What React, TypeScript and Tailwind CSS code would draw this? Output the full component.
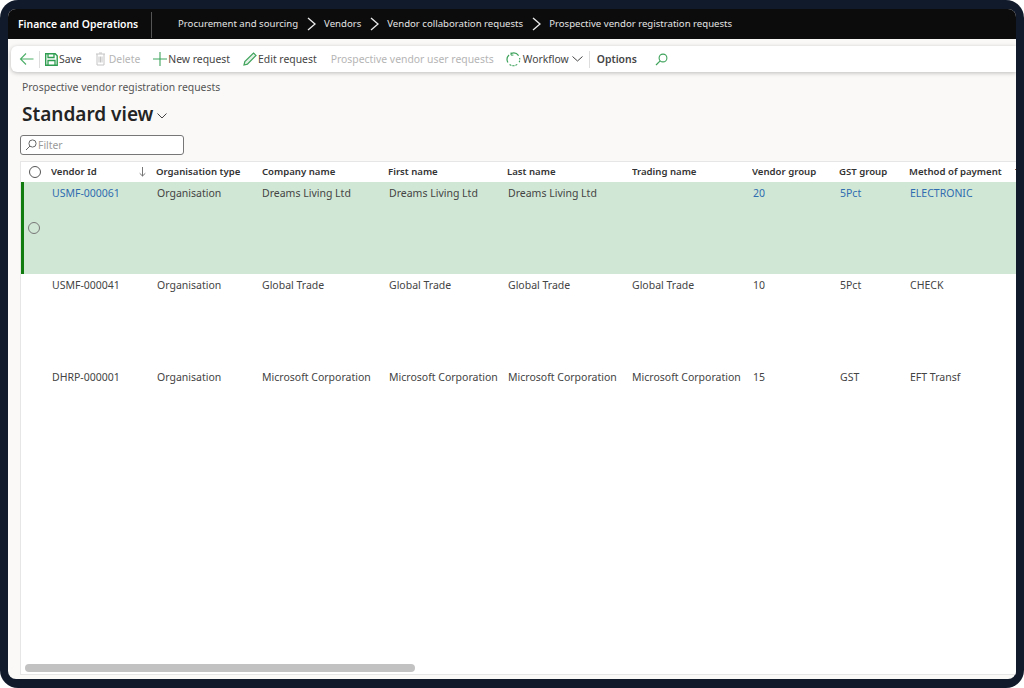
import React from "react";

const cols = "grid grid-cols-[30px_105px_106px_126px_119px_125px_120px_87px_70px_106px_40px]";

const headers = ["Vendor Id", "Organisation type", "Company name", "First name", "Last name", "Trading name", "Vendor group", "GST group", "Method of payment", "T"];

const rows = [
  { id: "USMF-000061", c: "Dreams Living Ltd", t: "", g: "20", s: "5Pct", m: "ELECTRONIC", sel: true },
  { id: "USMF-000041", c: "Global Trade", t: "Global Trade", g: "10", s: "5Pct", m: "CHECK", sel: false },
  { id: "DHRP-000001", c: "Microsoft Corporation", t: "Microsoft Corporation", g: "15", s: "GST", m: "EFT Transf", sel: false },
];

function Chevron() {
  return (
    <svg width="9" height="14" viewBox="0 0 9 14" fill="none" className="ml-[9px] mr-[8px]">
      <path d="M1 1 L8 7 L1 13" stroke="#e8e8e8" strokeWidth="1.4" />
    </svg>
  );
}

function Circle({ c = "#555" }: { c?: string }) {
  return <span className="block w-[12px] h-[12px] rounded-full border bg-transparent" style={{ borderColor: c }} />;
}

export default function App() {
  return (
    <div className="w-[1024px] h-[688px] bg-white overflow-hidden font-['Noto_Sans',sans-serif]">
      <div className="w-full h-full bg-[#111a2b] rounded-[18px] pt-[9px] pl-[8px] pr-[8px] pb-[9px]">
        <div className="w-full h-full flex flex-col rounded-[8px] overflow-hidden bg-[#faf9f8]">
          <header className="h-[30px] shrink-0 bg-[#0c0c0c] flex items-center text-[#e4e4e4] text-[9.6px] pt-[1px]">
            <div className="w-[144px] h-[26px] pl-[10px] flex items-center border-r border-[#555] font-semibold text-white text-[10.4px]">
              Finance and Operations
            </div>
            <div className="pl-[26px] flex items-center">
              <span>Procurement and sourcing</span>
              <Chevron />
              <span>Vendors</span>
              <Chevron />
              <span>Vendor collaboration requests</span>
              <Chevron />
              <span>Prospective vendor registration requests</span>
            </div>
          </header>

          <div className="h-[26px] mt-[7px] ml-[3px] bg-white rounded-l-[6px] shadow-[0_1px_4px_rgba(0,0,0,0.25)] flex items-center text-[10.4px] text-[#444]">
            <svg width="15" height="14" viewBox="0 0 15 14" fill="none" className="ml-[8px]">
              <path d="M14.5 7H1.5M7 1.5 1.5 7 7 12.5" stroke="#4caf68" strokeWidth="1.1" />
            </svg>
            <span className="w-px h-[17px] bg-[#ddd] ml-[5px]" />
            <svg width="13" height="13" viewBox="0 0 13 13" fill="none" className="ml-[5px]">
              <path d="M.7.7h9.5l2 2v9.6H.7z" stroke="#2f9e50" strokeWidth="1.4" />
              <path d="M3 .7v3.8h6V.7M3 12.3V7.5h7v4.8" stroke="#2f9e50" strokeWidth="1.3" />
            </svg>
            <span className="ml-[1px] pt-[2px]">Save</span>
            <svg width="11" height="14" viewBox="0 0 11 14" fill="none" className="ml-[13px]">
              <path d="M1 2h9M4 1h3M2 2v11h7V2M4 4.5v6M5.5 4.5v6M7 4.5v6" stroke="#c4c4c4" strokeWidth="1" />
            </svg>
            <span className="ml-[3px] pt-[2px] text-[#b5b5b5]">Delete</span>
            <svg width="14" height="14" viewBox="0 0 14 14" fill="none" className="ml-[13px]">
              <path d="M7 0v14M0 7h14" stroke="#3fa35c" strokeWidth="1.1" />
            </svg>
            <span className="ml-px pt-[2px]">New request</span>
            <svg width="14" height="14" viewBox="0 0 14 14" fill="none" className="ml-[13px]">
              <path d="M1 13l.8-3.5L10.5 1 13 3.4 4.4 12.2z" fill="#e3f2e6" stroke="#3fa35c" strokeWidth="1.2" />
            </svg>
            <span className="ml-px pt-[2px]">Edit request</span>
            <span className="ml-[14px] pt-[2px] text-[#b5b5b5]">Prospective vendor user requests</span>
            <svg width="15" height="15" viewBox="0 0 15 15" fill="none" className="ml-[12px]">
              <path d="M5 1.6A6.3 6.3 0 0 1 12.6 3.7" stroke="#3fa35c" strokeWidth="1.2" />
              <path d="M13.6 6A6.3 6.3 0 0 1 13 10.6" stroke="#3fa35c" strokeWidth="1.2" strokeDasharray="1.6 1" />
              <path d="M11.2 12.4A6.3 6.3 0 0 1 3.4 12.4" stroke="#3fa35c" strokeWidth="1.2" strokeDasharray="2 1" />
              <path d="M1.9 10.5A6.3 6.3 0 0 1 3 3" stroke="#3fa35c" strokeWidth="1.2" />
              <path d="M5 .5v2.6h2.4" stroke="#3fa35c" strokeWidth="1" />
            </svg>
            <span className="ml-[2px] pt-[2px]">Workflow</span>
            <svg width="11" height="6" viewBox="0 0 11 6" fill="none" className="ml-[3px]">
              <path d="M.5.5 5.5 5l5-4.5" stroke="#444" strokeWidth="1" />
            </svg>
            <span className="w-px h-[17px] bg-[#ddd] ml-[6px]" />
            <span className="ml-[7px] pt-[2px] font-semibold">Options</span>
            <svg width="13" height="13" viewBox="0 0 13 13" fill="none" className="ml-[18px]">
              <circle cx="8" cy="5" r="3.9" stroke="#3fa35c" strokeWidth="1.1" />
              <path d="M5.2 7.8 1 12" stroke="#3fa35c" strokeWidth="1.2" />
            </svg>
          </div>

          <div className="flex-1 min-h-0 flex flex-col pl-[12px] pb-[4px]">
            <div className="mt-[8px] h-[15px] pl-[2px] text-[10.4px] leading-[15px] text-[#555]">Prospective vendor registration requests</div>
            <div className="mt-[5px] h-[28px] pl-[2px] flex items-center text-[#242424]">
              <span className="text-[19px] font-semibold leading-[28px]">Standard view</span>
              <svg width="10" height="6" viewBox="0 0 10 6" fill="none" className="ml-[4px] mt-[4px]">
                <path d="M.5.5 5 5 9.5.5" stroke="#444" strokeWidth="1" />
              </svg>
            </div>
            <div className="mt-[7px] w-[164px] h-[20px] bg-white rounded-[3px] border border-[#777] flex items-center pl-[4px] text-[10.4px] text-[#9a9a9a]">
              <svg width="12" height="12" viewBox="0 0 12 12" fill="none">
                <circle cx="7.5" cy="4.5" r="3.6" stroke="#666" strokeWidth="1" />
                <path d="M5 7 1 11" stroke="#666" strokeWidth="1" />
              </svg>
              <span className="ml-[1px] pt-[2px]">Filter</span>
            </div>

            <div className="mt-[6px] flex-1 min-h-0 bg-white border-t border-l border-b border-[#e6e6e6] flex flex-col relative overflow-hidden">
              <div className={`${cols} h-[20px] shrink-0 items-center text-[9.6px] font-semibold text-[#333] bg-white`}>
                <div className="pl-[8px]"><Circle /></div>
                {headers.map((h, i) => (
                  <div key={h} className="whitespace-nowrap flex items-center overflow-hidden">
                    <span>{h}</span>
                    {i === 0 && (
                      <svg width="7" height="10" viewBox="0 0 7 10" fill="none" className="ml-[42px]">
                        <path d="M3.5 0v9M.7 6.3 3.5 9l2.8-2.7" stroke="#666" strokeWidth="0.9" />
                      </svg>
                    )}
                  </div>
                ))}
              </div>
              {rows.map((r) => (
                <div
                  key={r.id}
                  className={`${cols} h-[92px] shrink-0 text-[10.5px] text-[#444] relative ${r.sel ? "bg-[#d1e7d5]" : ""}`}
                >
                  {r.sel && <span className="absolute left-0 inset-y-0 w-[3px] bg-[#107c10]" />}
                  <div className="flex items-center pl-[7px]">
                    {r.sel && <Circle c="#777" />}
                  </div>
                  <div className={`pt-[4px] pl-px whitespace-nowrap ${r.sel ? "text-[#2f6cb0]" : ""}`}>{r.id}</div>
                  <div className="pt-[4px] pl-px">Organisation</div>
                  <div className="pt-[4px] whitespace-nowrap">{r.c}</div>
                  <div className="pt-[4px] pl-px whitespace-nowrap">{r.c}</div>
                  <div className="pt-[4px] pl-px whitespace-nowrap">{r.c}</div>
                  <div className="pt-[4px] whitespace-nowrap">{r.t}</div>
                  <div className={`pt-[4px] pl-px ${r.sel ? "text-[#2f6cb0]" : ""}`}>{r.g}</div>
                  <div className={`pt-[4px] pl-px ${r.sel ? "text-[#2f6cb0]" : ""}`}>{r.s}</div>
                  <div className={`pt-[4px] pl-px whitespace-nowrap ${r.sel ? "text-[#2f6cb0]" : ""}`}>{r.m}</div>
                  <div />
                </div>
              ))}
              <div className="absolute left-[4px] bottom-[2px] w-[390px] h-[8px] rounded-full bg-[#c2c2c2]" />
            </div>
          </div>
        </div>
      </div>
    </div>
  );
}
